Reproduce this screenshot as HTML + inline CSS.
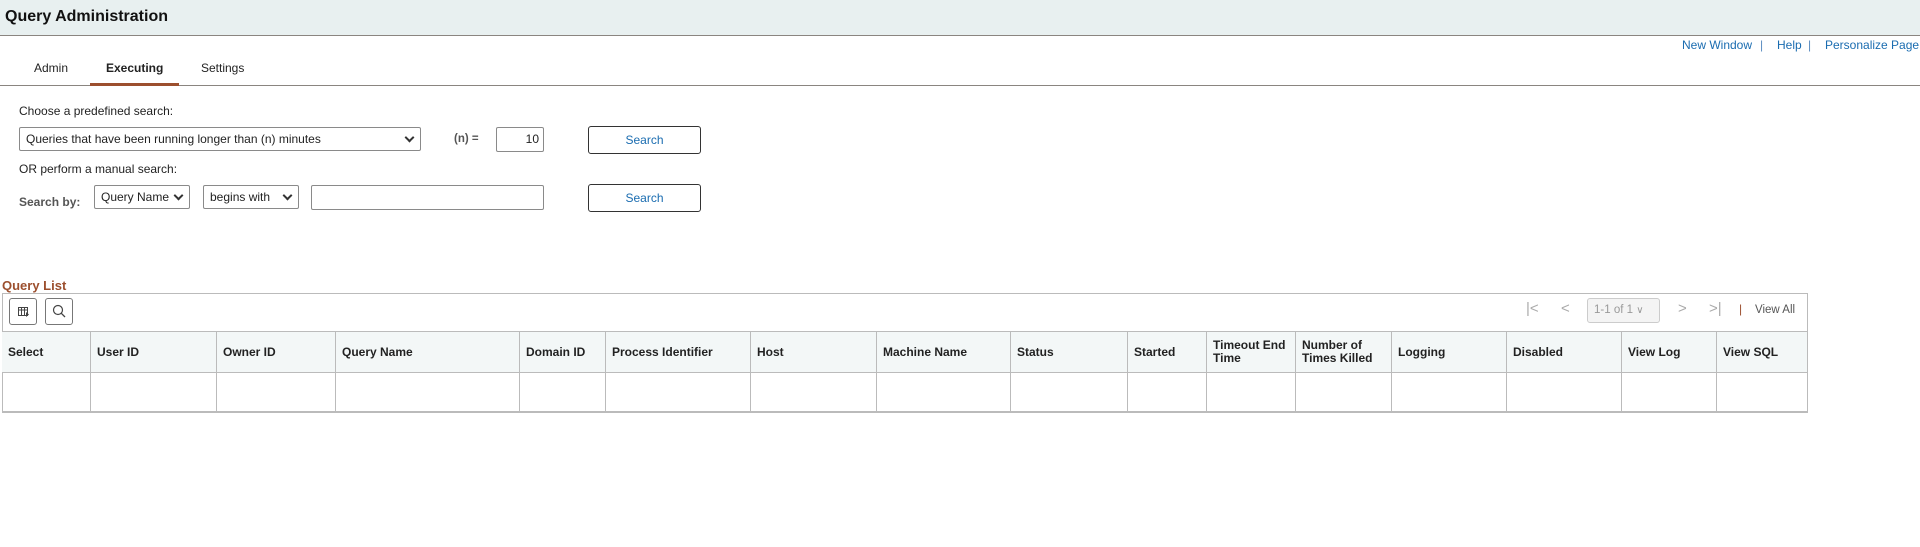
<!DOCTYPE html>
<html><head><meta charset="utf-8"><style>
*{box-sizing:border-box;margin:0;padding:0}
body{width:1920px;height:547px;background:#fff;font-family:"Liberation Sans",Arial,sans-serif;font-size:12px;color:#222;position:relative;overflow:hidden}
.a{position:absolute}
.hdr{left:0;top:0;width:1920px;height:36px;background:#e8f0f0;border-bottom:1px solid #8a8580}
.title{left:5px;top:8px;font-size:16px;font-weight:bold;color:#111}
.lnk{color:#1a6cb0;font-size:12px;top:38px}
.sep{color:#5a8cc0;font-size:12px;top:38px}
.tabline{left:0;top:85px;width:1920px;height:1px;background:#8a8580}
.tab{top:61px;font-size:12px}
.sel{border:1px solid #8a8a8a;border-radius:2px;background:#fff;font-size:12px;padding-left:6px;display:flex;align-items:center}
.chev{position:absolute;right:7px;top:6px;width:7px;height:7px;border-right:2px solid #333;border-bottom:2px solid #333;transform:rotate(45deg)}
.btn{border:1px solid #333;border-radius:3px;text-align:center;color:#1a6cb0;font-size:12px;background:#fff}
.grid{left:2px;top:293px;width:1806px;height:120px;border:1px solid #bbb;border-bottom:2px solid #bbb}
.th{top:331px;height:42px;background:#f3f7f7;border-top:1px solid #bbb;border-bottom:1px solid #bbb;border-right:1px solid #bbb;font-weight:bold;font-size:12px;padding-left:6px;display:flex;align-items:center;line-height:13px}
.td{top:373px;height:39px;border-right:1px solid #bbb}
.tb{top:298px;width:28px;height:27px;border:1px solid #777;border-radius:3px;background:#fff}
.pg{color:#aaa;font-size:15px;top:300px}
</style></head><body>
<div class="a hdr"></div>
<div class="a title">Query Administration</div>
<div class="a lnk" style="left:1682px">New Window</div><div class="a sep" style="left:1760px">|</div>
<div class="a lnk" style="left:1777px">Help</div><div class="a sep" style="left:1808px">|</div>
<div class="a lnk" style="left:1825px;white-space:nowrap">Personalize Page</div>
<div class="a tabline"></div>
<div class="a tab" style="left:34px">Admin</div>
<div class="a tab" style="left:106px;font-weight:bold">Executing</div>
<div class="a tab" style="left:201px">Settings</div>
<div class="a" style="left:90px;top:83px;width:89px;height:3px;background:#9c4f2e"></div>

<div class="a" style="left:19px;top:104px">Choose a predefined search:</div>
<div class="a sel" style="left:19px;top:127px;width:402px;height:24px">Queries that have been running longer than (n) minutes<span class="chev"></span></div>
<div class="a" style="left:454px;top:133px;font-size:11.5px;color:#555;font-weight:bold">(n) =</div>
<div class="a" style="left:496px;top:127px;width:48px;height:25px;border:1px solid #8a8a8a;border-radius:2px;text-align:right;padding-right:4px;line-height:23px">10</div>
<div class="a btn" style="left:588px;top:126px;width:113px;height:28px;line-height:26px">Search</div>

<div class="a" style="left:19px;top:162px">OR perform a manual search:</div>
<div class="a" style="left:19px;top:195px;font-weight:bold;color:#555">Search by:</div>
<div class="a sel" style="left:94px;top:185px;width:96px;height:24px;overflow:hidden;white-space:nowrap">Query Name<span class="chev" style="background:#fff;box-shadow:0 0 0 4px #fff"></span></div>
<div class="a sel" style="left:203px;top:185px;width:96px;height:24px">begins with<span class="chev"></span></div>
<div class="a" style="left:311px;top:185px;width:233px;height:25px;border:1px solid #8a8a8a;border-radius:2px"></div>
<div class="a btn" style="left:588px;top:184px;width:113px;height:28px;line-height:26px">Search</div>

<div class="a" style="left:2px;top:278px;font-weight:bold;color:#9c4f2e;font-size:13px">Query List</div>
<div class="a grid"></div>
<div class="a tb" style="left:9px"><svg width="26" height="25" viewBox="0 0 26 25"><g fill="none" stroke="#444" stroke-width="1"><rect x="8.5" y="8.5" width="9" height="8"/><line x1="8.5" y1="11" x2="17.5" y2="11"/><line x1="11.5" y1="8.5" x2="11.5" y2="16.5"/><line x1="14.5" y1="8.5" x2="14.5" y2="16.5"/></g><path d="M16 13l3 2.5-3 2.5z" fill="#444"/></svg></div>
<div class="a tb" style="left:45px"><svg width="26" height="25" viewBox="0 0 26 25"><circle cx="12" cy="11" r="4.5" fill="none" stroke="#444" stroke-width="1.2"/><line x1="15.2" y1="14.2" x2="19" y2="18" stroke="#444" stroke-width="1.3"/></svg></div>
<div class="a pg" style="left:1526px">|&lt;</div>
<div class="a pg" style="left:1561px">&lt;</div>
<div class="a" style="left:1587px;top:298px;width:73px;height:25px;border:1px solid #ccc;border-radius:3px;background:#f4f4f4;color:#999;font-size:11.5px;line-height:23px;padding-left:6px">1-1 of 1 <span style="font-size:10px">&#8744;</span></div>
<div class="a pg" style="left:1678px">&gt;</div>
<div class="a pg" style="left:1709px">&gt;|</div>
<div class="a" style="left:1739px;top:302px;color:#9c4f2e;font-size:12px">|</div>
<div class="a" style="left:1755px;top:304px;color:#555;font-size:11.5px">View All</div>

<div class="a th" style="left:2px;width:89px">Select</div>
<div class="a th" style="left:91px;width:126px">User ID</div>
<div class="a th" style="left:217px;width:119px">Owner ID</div>
<div class="a th" style="left:336px;width:184px">Query Name</div>
<div class="a th" style="left:520px;width:86px">Domain ID</div>
<div class="a th" style="left:606px;width:145px">Process Identifier</div>
<div class="a th" style="left:751px;width:126px">Host</div>
<div class="a th" style="left:877px;width:134px">Machine Name</div>
<div class="a th" style="left:1011px;width:117px">Status</div>
<div class="a th" style="left:1128px;width:79px">Started</div>
<div class="a th" style="left:1207px;width:89px">Timeout End<br>Time</div>
<div class="a th" style="left:1296px;width:96px">Number of<br>Times Killed</div>
<div class="a th" style="left:1392px;width:115px">Logging</div>
<div class="a th" style="left:1507px;width:115px">Disabled</div>
<div class="a th" style="left:1622px;width:95px">View Log</div>
<div class="a th" style="left:1717px;width:91px">View SQL</div>
<div class="a td" style="left:2px;width:89px"></div>
<div class="a td" style="left:91px;width:126px"></div>
<div class="a td" style="left:217px;width:119px"></div>
<div class="a td" style="left:336px;width:184px"></div>
<div class="a td" style="left:520px;width:86px"></div>
<div class="a td" style="left:606px;width:145px"></div>
<div class="a td" style="left:751px;width:126px"></div>
<div class="a td" style="left:877px;width:134px"></div>
<div class="a td" style="left:1011px;width:117px"></div>
<div class="a td" style="left:1128px;width:79px"></div>
<div class="a td" style="left:1207px;width:89px"></div>
<div class="a td" style="left:1296px;width:96px"></div>
<div class="a td" style="left:1392px;width:115px"></div>
<div class="a td" style="left:1507px;width:115px"></div>
<div class="a td" style="left:1622px;width:95px"></div>
</body></html>
